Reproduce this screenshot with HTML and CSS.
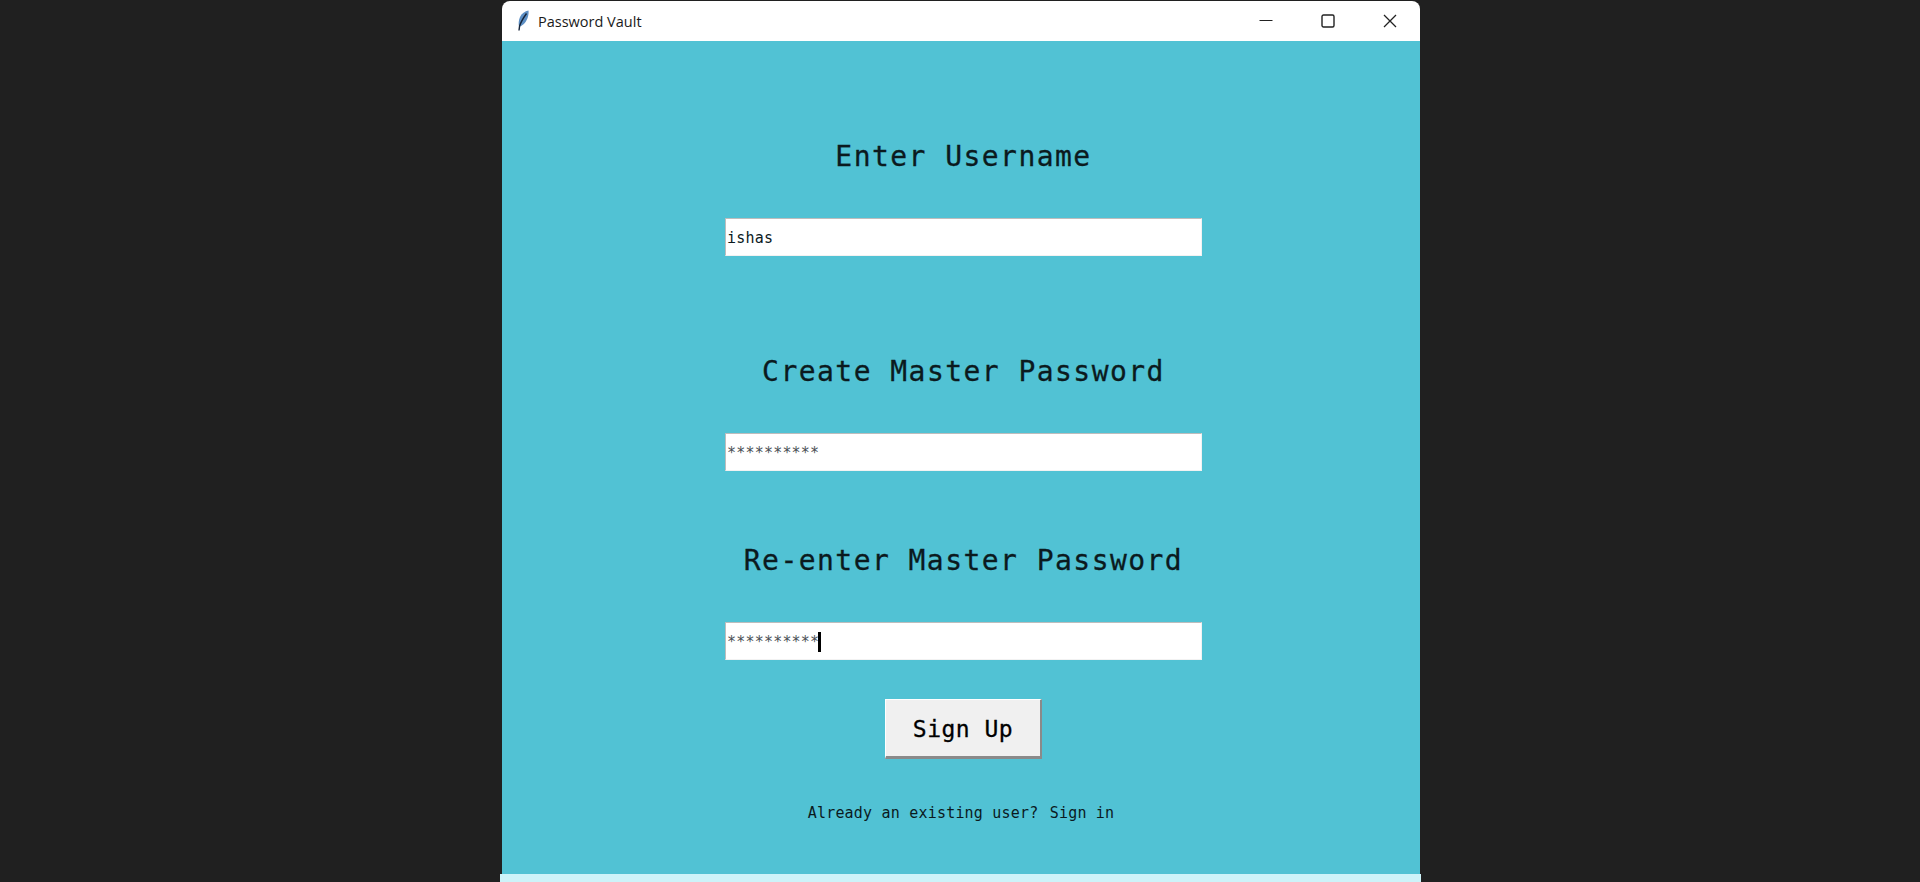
FILE: index.html
```html
<!DOCTYPE html>
<html lang="en">
<head>
  <meta charset="UTF-8">
  <title>Password Vault</title>
  <link rel="stylesheet" href="styles.css">
</head>
<body>
  <div class="window">
    <!-- TITLE BAR -->
    <div class="titlebar">
      <svg class="feather" width="16" height="22" viewBox="0 0 16 22">
        <path d="M13.5 0.5 C10 1 6.5 3.5 5 7 C3.6 10.5 3.2 14 4.2 17 C8.5 15.5 12 11 13 6.5 C13.5 4.5 13.8 2.5 13.5 0.5 Z" fill="#5d8fc4"/>
        <path d="M11.5 3.5 C9 7 6 11.5 4.6 16 L4 20.5" fill="none" stroke="#16243a" stroke-width="1.4"/>
      </svg>
      <span class="title">Password Vault</span>
      <div class="controls">
        <svg class="ctl" width="14" height="14" viewBox="0 0 14 14"><path d="M0.5 6.5 H13.5" stroke="#222" fill="none"/></svg>
        <svg class="ctl" width="14" height="14" viewBox="0 0 14 14"><rect x="1" y="1" width="12" height="12" rx="1.5" stroke="#222" stroke-width="1.4" fill="none"/></svg>
        <svg class="ctl" width="14" height="14" viewBox="0 0 14 14"><path d="M1 1 L13 13 M13 1 L1 13" stroke="#222" stroke-width="1.3" fill="none"/></svg>
      </div>
    </div>

    <!-- SIGN UP FORM -->
    <div class="content">
      <div class="label first">Enter Username</div>
      <div class="field">ishas</div>
      <div class="label second">Create Master Password</div>
      <div class="field secret">**********</div>
      <div class="label third">Re-enter Master Password</div>
      <div class="field secret">**********<span class="caret"></span></div>
      <button class="signup">Sign Up</button>
      <div class="note">Already an existing user? <a href="#">Sign in</a></div>
    </div>
  </div>
  <div class="strip"></div>
</body>
</html>
```

FILE: styles.css
```css
html, body {
  height: 100%;
}
body {
  margin: 0;
  background: #202020;
  overflow: hidden;
  display: flex;
  flex-direction: column;
  align-items: flex-start;
  padding: 1px 0 0 500px;
  box-sizing: border-box;
  font-family: "DejaVu Sans Mono", "Liberation Mono", monospace;
  color: #0b1a1e;
}
.window {
  width: 918px;
  margin-left: 2px;
  height: 873px;
  flex: none;
  display: flex;
  flex-direction: column;
}
.titlebar {
  height: 40px;
  flex: none;
  background: #fff;
  border-radius: 8px 8px 0 0;
  display: flex;
  align-items: center;
  padding-left: 13px;
  font-family: "Open Sans", "Noto Sans", sans-serif;
  font-size: 14.5px;
  color: #1a1a1a;
}
.feather {
  margin-right: 7px;
}
.controls {
  margin-left: auto;
  display: flex;
  align-items: center;
  gap: 48px;
  padding-right: 23px;
}
.content {
  flex: 1;
  background: #51c2d4;
  padding: 96px 218px 0 223px;
  display: flex;
  flex-direction: column;
  align-items: center;
}
.label {
  height: 40px;
  line-height: 40px;
  font-size: 28px;
  letter-spacing: 1.45px;
  white-space: pre;
  margin-bottom: 41px;
  -webkit-text-stroke: 0.3px #0b1a1e;
}
.second {
  margin-top: 96px;
}
.third {
  margin-top: 70px;
}
.field {
  width: 100%;
  height: 38px;
  box-sizing: border-box;
  background: #fff;
  border: 1px solid #f2f2f2;
  border-top-color: #bdbdbd;
  border-left-color: #bdbdbd;
  padding: 1px 0 0 1px;
  display: flex;
  align-items: center;
  font-size: 15px;
  letter-spacing: 0.2px;
  white-space: pre;
}
.secret {
  color: #4a4f55;
}
.caret {
  width: 3px;
  height: 20px;
  margin-left: -1px;
  background: #000;
}
.signup {
  width: 157px;
  height: 60px;
  margin-top: 39px;
  box-sizing: border-box;
  background: #f0f0f0;
  border: none;
  border-top: 1px solid #fff;
  border-left: 1px solid #fff;
  border-right: 2px solid #8a8a8a;
  border-bottom: 3px solid #8a8a8a;
  font-family: inherit;
  font-size: 23px;
  letter-spacing: 0.5px;
  color: #000;
  padding: 2px 0 0;
  -webkit-text-stroke: 0.3px #000;
}
.note {
  height: 20px;
  line-height: 20px;
  margin-top: 44px;
  padding-right: 5px;
  font-size: 15px;
  letter-spacing: 0.2px;
  white-space: pre;
}
.note a {
  color: inherit;
  text-decoration: none;
  margin-left: 2px;
}
.strip {
  width: 921px;
  flex: 1;
  background: #cdf3f9;
}
```
